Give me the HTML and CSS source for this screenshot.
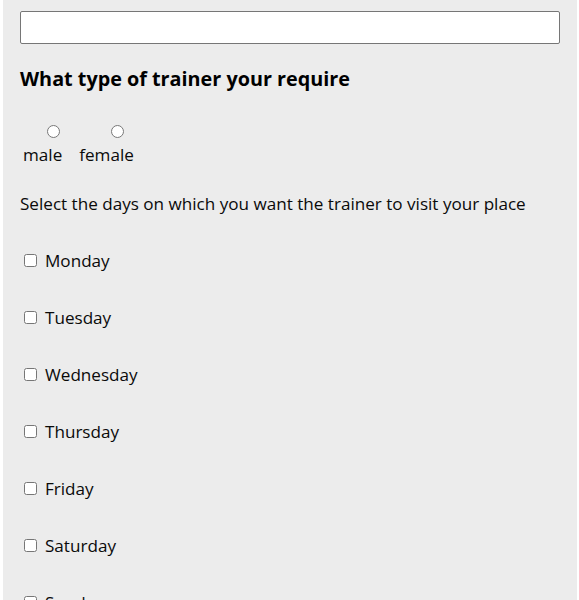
FILE: index.html
```html
<!DOCTYPE html>
<html>
<head>
    <meta charset="utf-8">
    <title>Trainer request</title>
    <link rel="stylesheet" href="styles.css">
</head>
<body>
    <form class="trainer-form">
        <input type="text" class="name-field">
        <h3 class="question">What type of trainer your require</h3>
        <div class="gender">
            <label class="gender-option"><input type="radio" name="gender" value="male"><span>male</span></label>
            <label class="gender-option"><input type="radio" name="gender" value="female"><span>female</span></label>
        </div>
        <p class="days-intro">Select the days on which you want the trainer to visit your place</p>
        <div class="days">
            <label class="day"><input type="checkbox" name="day" value="monday"> Monday</label>
            <label class="day"><input type="checkbox" name="day" value="tuesday"> Tuesday</label>
            <label class="day"><input type="checkbox" name="day" value="wednesday"> Wednesday</label>
            <label class="day"><input type="checkbox" name="day" value="thursday"> Thursday</label>
            <label class="day"><input type="checkbox" name="day" value="friday"> Friday</label>
            <label class="day"><input type="checkbox" name="day" value="saturday"> Saturday</label>
            <label class="day"><input type="checkbox" name="day" value="sunday"> Sunday</label>
        </div>
    </form>
</body>
</html>
```

FILE: styles.css
```css
html, body {
    margin: 0;
    padding: 0;
    background: #fff;
}
body {
    font-family: "Open Sans", "Noto Sans", sans-serif;
    font-size: 17.1px;
    color: #0a0a0a;
}
.trainer-form {
    margin: 0 2px 0 3px;
    padding: 11px 17px 40px 17px;
    background: #ececec;
    min-height: 600px;
    box-sizing: border-box;
}
.name-field {
    display: block;
    box-sizing: border-box;
    width: 540px;
    height: 33px;
    margin: 0;
    border: 1px solid #767676;
    border-radius: 2px;
    background: #fff;
}
.question {
    font-size: 19.8px;
    font-weight: 700;
    color: #000;
    margin: 21px 0 0 0;
    line-height: 28px;
}
.gender {
    display: flex;
    gap: 17px;
    margin: 32px 0 0 3px;
}
.gender-option {
    display: flex;
    flex-direction: column;
    align-items: center;
}
.gender-option input {
    margin: 0 0 0 22px;
    width: 13px;
    height: 13px;
}
.gender-option span {
    line-height: 23px;
    margin-top: 5px;
}
.days-intro {
    margin: 26px 0 0 0;
    line-height: 23px;
}
.days {
    display: flex;
    flex-direction: column;
    gap: 34px;
    margin-top: 34px;
}
.day {
    display: flex;
    align-items: center;
    line-height: 23px;
}
.day input {
    margin: 0 8px 0 4px;
    width: 13px;
    height: 13px;
}
```
